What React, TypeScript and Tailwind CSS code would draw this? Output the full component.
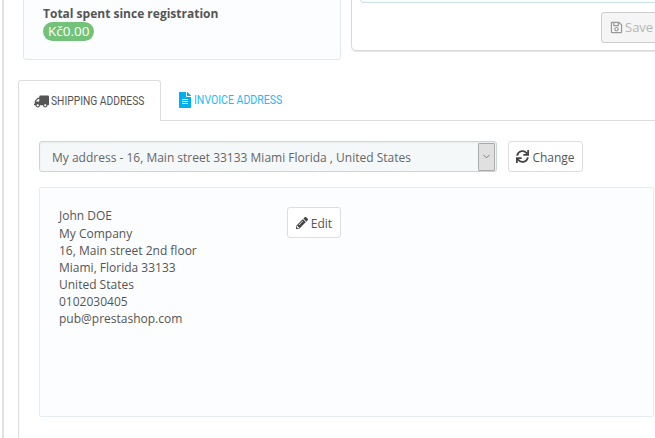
import { FaFileAlt, FaPencilAlt, FaRegSave, FaSync, FaTruck } from "react-icons/fa";
import { LuChevronDown } from "react-icons/lu";

const addressLines = [
  "John DOE",
  "My Company",
  "16, Main street 2nd floor",
  "Miami, Florida 33133",
  "United States",
  "0102030405",
  "pub@prestashop.com",
];

const App = () => {
  return (
    <div className="h-[438px] w-[655px] overflow-hidden bg-white font-['Open_Sans',sans-serif] text-xs text-[#555]">
      <div className="ml-[2px] h-full border-l-2 border-[#dfe3e7] pl-[14px]">
        <div className="flex items-start gap-[10px] pl-[5px]">
          <div className="mt-[-40px] h-[100px] w-[318px] shrink-0 rounded-[3px] border border-[#e3e8ef] bg-[#fcfdfe] pl-[19px] pt-[46px]">
            <p className="text-[12px] font-bold leading-[14px] text-[#555]">Total spent since registration</p>
            <span className="mt-[1px] inline-block rounded-[10px] bg-[#72c279] px-[5px] text-[13.5px] leading-[19px] text-white">Kč0.00</span>
          </div>
          <div className="mt-[-40px] h-[91px] w-[320px] shrink-0 rounded-[5px] border border-[#d9d9d9] pl-[8px] pr-[8px] shadow-[0_1px_1px_#e5e5e5]">
            <div className="h-[42px] rounded-[3px] border border-[#cddfe5] bg-[#fafdfe]" />
            <div className="mt-[9px] flex justify-end">
              <button className="flex h-[31px] w-[61px] shrink-0 items-center gap-[2px] rounded-[3px] border border-[#ccc] bg-[#f5f5f5] pl-[8px] text-[13px] text-[#b5b5b5]">
                <FaRegSave className="shrink-0 text-[13px] text-[#999]" />
                Save
              </button>
            </div>
          </div>
        </div>

        <div className="mt-[20px] flex h-[41px] items-end">
          <div className="flex h-[41px] w-[143px] items-center gap-[2px] rounded-t-[3px] border border-b-0 border-[#ddd] bg-white pl-[15px] font-['Roboto',sans-serif] text-[13px] text-[#555]">
            <FaTruck className="shrink-0 -scale-x-100 text-[15px]" />
            <span className="origin-left scale-x-[0.79] whitespace-nowrap">SHIPPING ADDRESS</span>
          </div>
          <div className="flex h-[41px] flex-1 items-center gap-[1px] border-b border-[#ddd] pl-[16px] font-['Roboto',sans-serif] text-[13px] text-[#25b9f8]">
            <FaFileAlt className="shrink-0 text-[16px] text-[#00aff0]" />
            <span className="origin-left scale-x-[0.81] whitespace-nowrap">INVOICE ADDRESS</span>
          </div>
        </div>

        <div className="h-[317px] w-[700px] border-l border-[#ddd] pl-[20px] pt-[20px]">
          <div className="flex gap-[11px]">
            <div className="flex h-[31px] w-[458px] items-center justify-between rounded-[3px] border border-[#c7d6db] bg-[#f5f8f9] pl-[12px] pr-[1px] shadow-[inset_0_1px_2px_rgba(0,0,0,0.05)]">
              <span className="pt-[2px] text-[#666]">My address - 16, Main street 33133 Miami Florida , United States</span>
              <span className="flex h-[28px] w-[17px] items-center justify-center rounded-[1px] border border-[#aaa] bg-[#e0e0e0]">
                <LuChevronDown className="text-[11px] text-[#777]" />
              </span>
            </div>
            <button className="flex h-[31px] w-[75px] items-center justify-center gap-[3px] rounded-[3px] border border-[#dedede] bg-white pt-[2px] text-[#555]">
              <FaSync className="mb-[2px] text-[13px] text-[#444]" />
              Change
            </button>
          </div>
          <div className="mt-[15px] flex h-[230px] w-[615px] gap-[89px] rounded-[2px] border border-[#e6ecf3] bg-[#fcfdfe] pl-[19px] pt-[19.4px]">
            <div className="w-[139px] text-[12px] leading-[17.14px] text-[#555]">
              {addressLines.map((line) => (
                <div key={line}>{line}</div>
              ))}
            </div>
            <button className="flex h-[31px] w-[54px] items-center justify-center gap-[3px] rounded-[3px] border border-[#dedede] bg-white pt-[2px] text-[#555]">
              <FaPencilAlt className="mb-[2px] text-[12px] text-[#444]" />
              Edit
            </button>
          </div>
        </div>
      </div>
    </div>
  );
};

export default App;
